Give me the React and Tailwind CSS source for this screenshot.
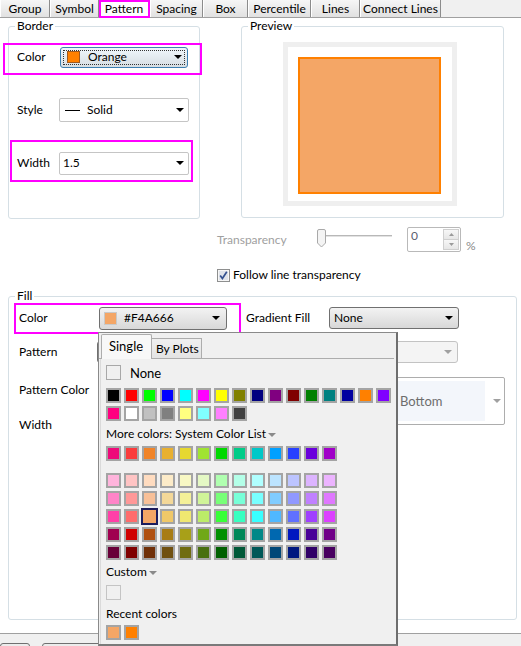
import React from 'react';

const tabs = [
  { name: 'Group', w: 'w-[50px]' },
  { name: 'Symbol', w: 'w-[49px]' },
  { name: 'Pattern', w: 'w-[51px]', active: true },
  { name: 'Spacing', w: 'w-[53px]' },
  { name: 'Box', w: 'w-[45px]' },
  { name: 'Percentile', w: 'w-[63px]' },
  { name: 'Lines', w: 'w-[49px]' },
  { name: 'Connect Lines', w: 'w-[81px]' },
];

const basic1 = ['#000000', '#ff0000', '#00ff00', '#0000ff', '#00ffff', '#ff00ff', '#ffff00', '#808000', '#000080', '#800080', '#800000', '#008000', '#008080', '#0000a0', '#ff8000', '#8000ff'];
const basic2 = ['#ff0080', '#ffffff', '#c0c0c0', '#808080', '#ffff80', '#80ffff', '#ff80ff', '#404040'];
const system = ['#ee0a7a', '#fa3c3c', '#f08428', '#e8b030', '#e6d830', '#a0e432', '#00d800', '#00cc88', '#00c8c8', '#00a0ff', '#2840ff', '#6a00dc', '#a000c8'];
const shades = [
  ['#ffb4dc', '#ffc4c4', '#ffdcc0', '#fcebc8', '#f8f8c4', '#e4f8c4', '#b0ffb0', '#b4ffe8', '#b0ffff', '#bce4ff', '#bcc4ff', '#dcb4ff', '#ecb4ff'],
  ['#ff84c8', '#ff9898', '#f8c098', '#f4d898', '#f4f098', '#d0f498', '#78ff78', '#78ffd8', '#78ffff', '#80ccff', '#9098ff', '#c080ff', '#e078ff'],
  ['#ff40a8', '#ff6c6c', '#f4a666', '#f0c868', '#f0e870', '#bcec68', '#38ff38', '#38ffc0', '#38ffff', '#50b8ff', '#6070ff', '#a040ff', '#dc40ff'],
  ['#a00050', '#d00000', '#b05010', '#a87c14', '#a8a018', '#70a818', '#009000', '#008858', '#008888', '#0068b0', '#0018c0', '#480098', '#700088'],
  ['#680038', '#800000', '#703008', '#705010', '#706c10', '#487010', '#006000', '#005838', '#005858', '#004878', '#001880', '#300068', '#480060'],
];

function Arrow({ gray }) {
  return (
    <svg width="8" height="4" viewBox="0 0 8 4" className="shrink-0">
      <path d="M0 0H8L4 4Z" fill={gray ? '#a0a0a0' : '#000'} />
    </svg>
  );
}

function SmallArrow() {
  return (
    <svg width="8" height="4" viewBox="0 0 8 4" className="shrink-0 ml-[2px] mt-[2px]">
      <path d="M0 0H8L4 4Z" fill="#8a8a8a" />
    </svg>
  );
}

function Swatch({ color, selected }) {
  if (selected) {
    return <div className="w-[17px] h-[17px] -m-[1px] border-2 border-[#1c1c5c]" style={{ background: color }} />;
  }
  return <div className="w-[15px] h-[15px] border-2 border-[#a4a4a4]" style={{ background: color }} />;
}

function SwatchRow({ colors, sel }) {
  return (
    <div className="flex gap-[3px]">
      {colors.map((c, i) => <Swatch key={i} color={c} selected={sel === i} />)}
    </div>
  );
}

function TabBar() {
  return (
    <div className="flex h-[18px] shrink-0 bg-[#f0f0f0] border-b border-[#a0a0a0]">
      {tabs.map(t => t.active ? (
        <div key={t.name} className={`${t.w} h-[18px] flex items-center justify-center bg-white border-2 border-[#ff00ff] pr-[1px]`}>
          {t.name}
        </div>
      ) : (
        <div key={t.name} className={`${t.w} h-[17px] flex items-center justify-center border-l border-white border-r border-r-[#8c8c8c] bg-linear-to-b from-[#f6f6f6] to-[#e1e1e1]`}>
          {t.name}
        </div>
      ))}
    </div>
  );
}

function ColorPopup() {
  return (
    <div className="absolute left-[98px] top-[332px] w-[300px] h-[314px] bg-[#f0f0f0] border border-[#8a8a8a] border-r-2 border-r-[#6e6e6e] border-b-2 border-b-[#7a7a7a] flex flex-col">
      <div className="flex items-end h-[25px] mt-[1px] pl-[2px] mr-[2px] border-b border-[#adadad]">
        <div className="w-[51px] h-[25px] -mb-px bg-[#f8f8f8] border border-b-0 border-[#adadad] rounded-t-[2px] pl-[7px] pt-[4px] text-[13px]">Single</div>
        <div className="w-[50px] h-[20px] bg-linear-to-b from-[#f0f0f0] to-[#e3e3e3] border border-b-0 border-l-0 border-[#adadad] pl-[4px] pt-[3px]">By Plots</div>
      </div>
      <div className="flex-1 ml-[1px] border-l border-[#dadada] pl-[5px] pt-[6px] flex flex-col">
        <div className="flex items-center h-[15px]">
          <div className="w-[15px] h-[15px] border border-[#a8a8a8] bg-[#f0f0f0]" />
          <span className="ml-[9px] text-[13px]">None</span>
        </div>
        <div className="mt-[8px] flex flex-col gap-[3px]">
          <SwatchRow colors={basic1} />
          <SwatchRow colors={basic2} />
        </div>
        <div className="mt-[6px] h-[14px] flex items-center">More colors: System Color List<SmallArrow /></div>
        <div className="mt-[5px]"><SwatchRow colors={system} /></div>
        <div className="mt-[12px] flex flex-col gap-[3px]">
          {shades.map((row, i) => <SwatchRow key={i} colors={row} sel={i === 2 ? 2 : -1} />)}
        </div>
        <div className="mt-[5px] h-[14px] flex items-center">Custom<SmallArrow /></div>
        <div className="mt-[6px] w-[15px] h-[15px] border border-[#c4c4c4] bg-[#f0f0f0]" />
        <div className="mt-[7px] h-[14px] flex items-center">Recent colors</div>
        <div className="mt-[4px]"><SwatchRow colors={['#f4a666', '#ff8000']} /></div>
      </div>
    </div>
  );
}

export default function App() {
  return (
    <div className="relative w-[521px] h-[646px] overflow-hidden bg-white flex flex-col font-['Lato',sans-serif] text-[12px] leading-[14px] text-black">
      <TabBar />

      <div className="flex-1 flex flex-col">
        <div className="flex mt-[1px]">
          <fieldset className="ml-[8px] w-[192px] h-[200px] border border-[#d5dfe5] rounded-[3px]">
            <legend className="ml-[6px] px-[2px]">Border</legend>
            <div className="flex flex-col gap-[31px] pl-[8px] pt-[13px]">
              <div className="flex items-center h-[22px]">
                <div className="w-[43px]">Color</div>
                <div className="w-[128px] h-[21px] p-[2px] border border-[#3c7fb1] rounded-[3px] bg-linear-to-b from-[#f0f7fc] to-[#d6dde2]">
                  <div className="h-full border border-dotted border-[#333] flex items-center pl-[3px] pr-[2px]">
                    <div className="w-[13px] h-[12px] bg-[#ff8000] border border-[#a05a20]" />
                    <span className="ml-[8px] flex-1">Orange</span>
                    <Arrow />
                  </div>
                </div>
              </div>
              <div className="flex items-center h-[22px]">
                <div className="w-[42px]">Style</div>
                <div className="w-[130px] h-[24px] border border-[#c5c5c5] rounded-[2px] bg-white flex items-center pl-[5px] pr-[4px]">
                  <div className="w-[15px] h-[1px] bg-black" />
                  <span className="ml-[7px] flex-1">Solid</span>
                  <Arrow />
                </div>
              </div>
              <div className="flex items-center h-[22px]">
                <div className="w-[42px]">Width</div>
                <div className="w-[130px] h-[23px] border border-[#c5c5c5] rounded-[2px] bg-white flex items-center pl-[3px] pr-[4px]">
                  <span className="flex-1">1.5</span>
                  <Arrow />
                </div>
              </div>
            </div>
          </fieldset>

          <fieldset className="ml-[41px] w-[263px] h-[199px] border border-[#d5dfe5] rounded-[3px]">
            <legend className="ml-[6px] px-[2px]">Preview</legend>
            <div className="ml-[41px] mt-[9px] w-[174px] h-[164px] border-[5px] border-[#efefef] bg-white p-[10px]">
              <div className="w-[143px] h-[137px] bg-[#f4a666] border-2 border-[#ff8000]" />
            </div>
          </fieldset>
        </div>

        <div className="ml-[217px] mt-[8px] flex items-center h-[25px]">
          <div className="w-[99px] text-[#a0a0a0]">Transparency</div>
          <svg width="77" height="19" viewBox="0 0 77 19" className="shrink-0 -mt-[2px]">
            <rect x="10" y="6" width="66" height="2" fill="#e2e2e2" />
            <line x1="10" y1="6.5" x2="76" y2="6.5" stroke="#b8b8b8" />
            <path d="M1.5 2 Q1.5 0.5 3 0.5 H8 Q9.5 0.5 9.5 2 V14 L5.5 18 L1.5 14 Z" fill="#f4f4f4" stroke="#a9a9a9" />
          </svg>
          <div className="ml-[14px] w-[54px] h-[25px] border border-[#b9b9b9] rounded-[2px] bg-white flex">
            <div className="flex-1 pl-[3px] pt-[1px] text-[#5a6070]">0</div>
            <div className="w-[16px] flex flex-col my-[1px] mr-[1px]">
              <div className="flex-1 border border-[#cfcfcf] bg-linear-to-b from-[#f7f7f7] to-[#e6e6e6] flex items-center justify-center">
                <svg width="5" height="3" viewBox="0 0 5 3"><path d="M0 3H5L2.5 0Z" fill="#9a9a9a" /></svg>
              </div>
              <div className="flex-1 border border-t-0 border-[#cfcfcf] bg-linear-to-b from-[#f7f7f7] to-[#e6e6e6] flex items-center justify-center">
                <svg width="5" height="3" viewBox="0 0 5 3"><path d="M0 0H5L2.5 3Z" fill="#9a9a9a" /></svg>
              </div>
            </div>
          </div>
          <div className="ml-[5px] self-end -mb-[1px] text-[#8a8a8a]">%</div>
        </div>

        <div className="ml-[217px] mt-[16px] flex items-center h-[14px]">
          <svg width="13" height="13" viewBox="0 0 13 13" className="shrink-0">
            <rect x="0.5" y="0.5" width="12" height="12" fill="#f6f6f6" stroke="#8e8f8f" />
            <rect x="2" y="2" width="9" height="9" fill="#dfe3ea" />
            <path d="M3.2 6.4 L5.4 9.4 L9.8 2.8" fill="none" stroke="#33508f" strokeWidth="1.7" />
          </svg>
          <span className="ml-[3px]">Follow line transparency</span>
        </div>

        <fieldset className="ml-[8px] mt-[7px] w-[509px] h-[331px] border border-[#d5dfe5] rounded-[3px]">
          <legend className="ml-[6px] px-[2px]">Fill</legend>
          <div className="pl-[10px] flex flex-col">
            <div className="mt-[3px] flex items-center h-[24px]">
              <div className="w-[80px]">Color</div>
              <div className="w-[128px] h-[23px] border border-[#707070] rounded-[3px] bg-linear-to-b from-[#f3f3f3] to-[#d8d8d8] flex items-center pl-[4px] pr-[6px]">
                <div className="w-[13px] h-[13px] bg-[#f4a666] border border-[#c9c9c9]" />
                <span className="ml-[7px] flex-1">#F4A666</span>
                <Arrow />
              </div>
              <div className="ml-[19px] w-[83px]">Gradient Fill</div>
              <div className="w-[130px] h-[22px] border border-[#707070] rounded-[3px] bg-linear-to-b from-[#f3f3f3] to-[#d8d8d8] flex items-center pl-[4px] pr-[5px]">
                <span className="flex-1">None</span>
                <Arrow />
              </div>
            </div>

            <div className="mt-[11px] flex items-center h-[22px]">
              <div className="w-[78px]">Pattern</div>
              <div className="w-[128px] h-[22px] border border-[#707070] rounded-[3px] bg-[#e6e6e6]" />
              <div className="ml-[104px] w-[129px] h-[22px] border border-[#c3c3c3] rounded-[3px] bg-[#f4f4f4] flex items-center justify-end pr-[5px]">
                <Arrow gray />
              </div>
            </div>

            <div className="mt-[14px] flex">
              <div className="w-[80px] flex flex-col">
                <div className="mt-[6px]">Pattern Color</div>
                <div className="mt-[21px]">Width</div>
              </div>
              <div className="ml-[230px] w-[176px] h-[48px] border border-[#adadad] rounded-[2px] flex items-center">
                <div className="ml-[2px] w-[153px] h-[40px] bg-[#f3f6fb] flex items-center pl-[68px] text-[#6d6d6d] text-[13px]">Bottom</div>
                <div className="ml-[8px]"><Arrow gray /></div>
              </div>
            </div>
          </div>
        </fieldset>
      </div>

      <div className="h-[13px] shrink-0 border-t border-[#a0a0a0] bg-[#f0f0f0] flex items-start pt-[9px]">
        <div className="w-[30px] h-[20px] border border-[#707070] rounded-[3px] bg-[#ececec]" />
        <div className="ml-[12px] w-[100px] h-[20px] border border-[#707070] rounded-[3px] bg-[#ececec]" />
      </div>

      {/* annotation frames */}
      <div className="absolute left-[3px] top-[43px] w-[199px] h-[32px] border-2 border-[#ff00ff] pointer-events-none" />
      <div className="absolute left-[10px] top-[140px] w-[183px] h-[42px] border-2 border-[#ff00ff] pointer-events-none" />
      <div className="absolute left-[14px] top-[303px] w-[227px] h-[31px] border-2 border-[#ff00ff] pointer-events-none" />

      <ColorPopup />
    </div>
  );
}
